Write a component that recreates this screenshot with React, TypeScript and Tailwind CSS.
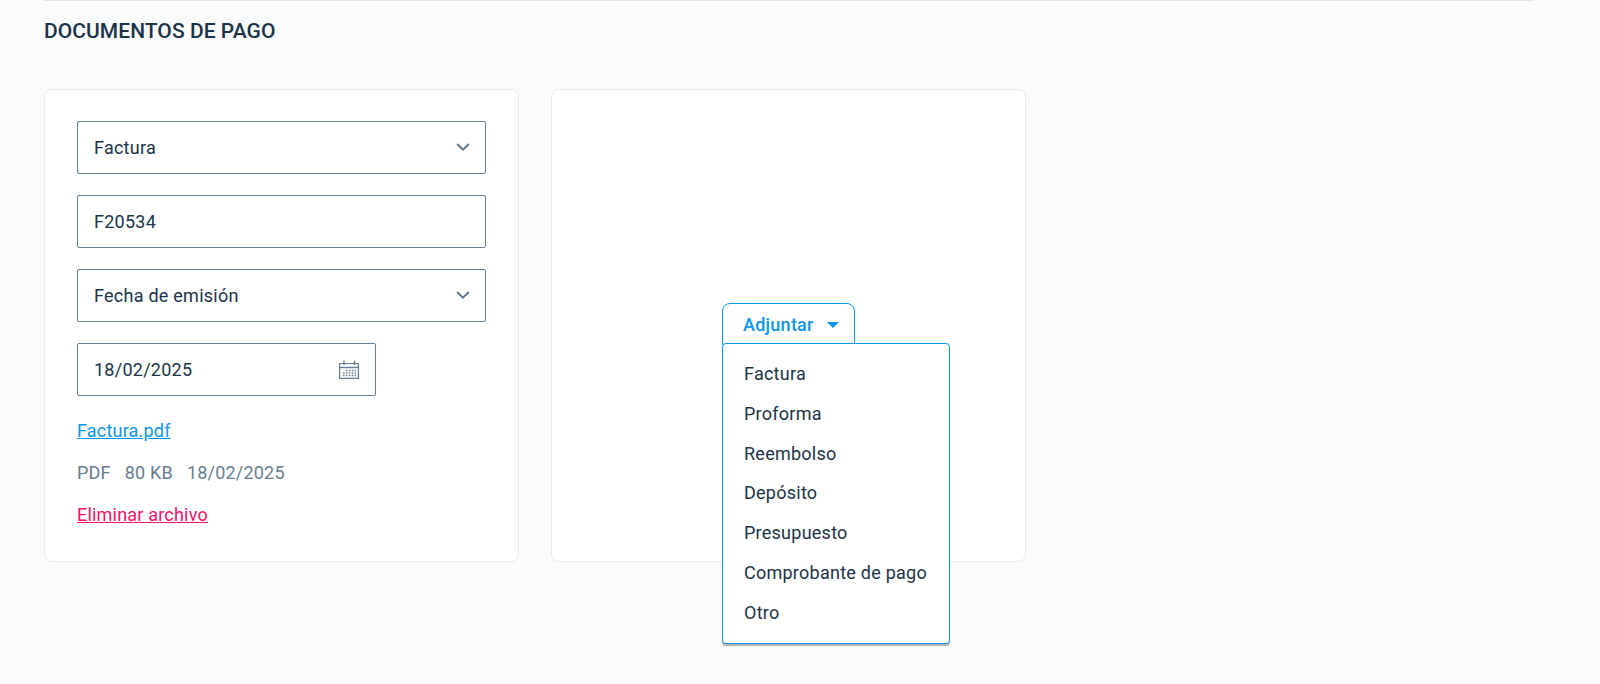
import type { ReactNode } from "react"

const opciones = ["Factura", "Proforma", "Reembolso", "Depósito", "Presupuesto", "Comprobante de pago", "Otro"]

function ChevronIcon() {
  return (
    <svg className="mb-px h-2 w-3.5" viewBox="0 0 14 8" fill="none" stroke="#5c748c" strokeWidth={1.8}>
      <path d="M1.2 1L7 6.7L12.8 1" />
    </svg>
  )
}

function CalendarIcon() {
  return (
    <svg className="mr-px h-5 w-5" viewBox="0 0 20 20" fill="none" stroke="#647c93">
      <path d="M0.6 3.5H19.4V18.4H0.6Z" strokeWidth={1.2} />
      <path d="M0.6 7.5H19.4" strokeWidth={1.4} />
      <path d="M5 0.5V5M15.5 0.5V5" strokeWidth={1.3} />
      <path d="M7 10.5H17M4 13H17M4 15.5H17" strokeWidth={1.3} strokeDasharray="1.5 1.4" />
    </svg>
  )
}

interface CampoProps {
  className?: string
  valor: string
  children?: ReactNode
}

function Campo({ className = "", valor, children }: CampoProps) {
  return (
    <div
      className={`flex h-[53px] items-center justify-between rounded-[2px] border border-[#667e95] pr-[15px] pl-4 ${className}`}
    >
      <span>{valor}</span>
      {children}
    </div>
  )
}

export default function App() {
  return (
    <div className="h-[684px] overflow-hidden bg-[#fafbfd] pl-11 font-['Roboto',sans-serif] text-[18px] leading-6 tracking-[0.25px] text-[#1a3349]">
      <div className="h-px w-[1490px] bg-[#e2e3e5]" />
      <h1 className="mt-[18px] text-[21px] leading-6 font-medium tracking-[0.05px]">DOCUMENTOS DE PAGO</h1>

      <div className="mt-[46px] flex gap-8">
        <div className="h-[473px] w-[475px] rounded-lg border border-[#e6e9ed] bg-white px-8 pt-[31px]">
          <div className="flex flex-col gap-[21px]">
            <Campo valor="Factura">
              <ChevronIcon />
            </Campo>
            <Campo valor="F20534" />
            <Campo valor="Fecha de emisión">
              <ChevronIcon />
            </Campo>
            <Campo valor="18/02/2025" className="w-[299px]">
              <CalendarIcon />
            </Campo>
          </div>
          <div className="mt-[23px] flex flex-col items-start gap-[18px] tracking-[0.2px]">
            <a className="text-[#0a96ec] underline">Factura.pdf</a>
            <div className="flex gap-3.5 text-[#667e94]">
              <span>PDF</span>
              <span>80 KB</span>
              <span>18/02/2025</span>
            </div>
            <a className="text-[#f5106a] underline">Eliminar archivo</a>
          </div>
        </div>

        <div className="flex h-[473px] w-[475px] justify-center rounded-lg border border-[#e6e9ed] bg-white pt-[213px]">
          <div className="relative h-[42px] w-[133px]">
            <button className="flex h-[42px] w-full items-center justify-between rounded-t-lg border border-[#0a96ec] bg-white pt-0.5 pr-[15px] pl-5 font-medium text-[#0a96ec]">
              Adjuntar
              <svg className="h-1.5 w-3" viewBox="0 0 12 6" fill="#0a96ec">
                <path d="M0 0H12L6 6Z" />
              </svg>
            </button>
            <ul className="absolute top-10 left-0 h-[301px] w-[228px] rounded-[4px] border border-[#0a96ec] bg-white pt-[10.2px] pl-[21px] shadow-[0_2px_1px_rgba(0,0,0,0.3)]">
              {opciones.map((opcion) => (
                <li key={opcion} className="flex h-[39.75px] items-center whitespace-nowrap">
                  {opcion}
                </li>
              ))}
            </ul>
          </div>
        </div>
      </div>
    </div>
  )
}
